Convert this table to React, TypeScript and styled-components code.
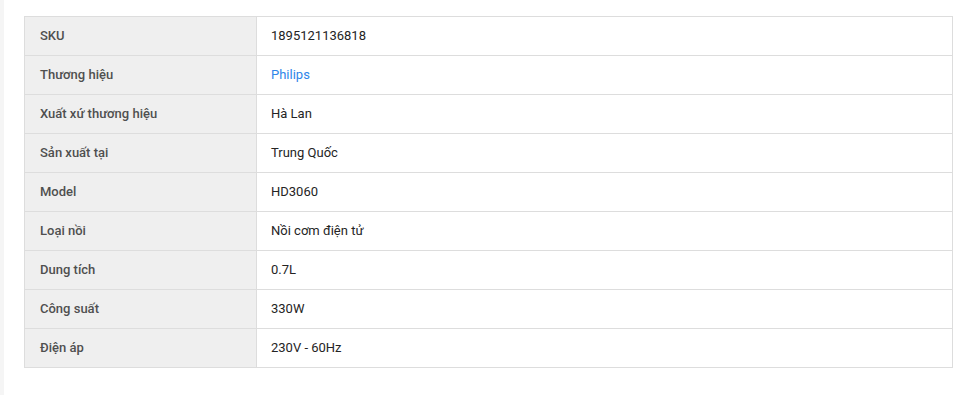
import styled, { createGlobalStyle } from "styled-components";

const GlobalStyle = createGlobalStyle`
    html, body {
        margin: 0;
        padding: 0;
        background: #ffffff;
        font-family: Roboto, "Liberation Sans", Arial, sans-serif;
    }
    * { box-sizing: border-box; }
`

const rows: { label: string; value: string; link?: boolean }[] = [
    { label: "SKU", value: "1895121136818" },
    { label: "Thương hiệu", value: "Philips", link: true },
    { label: "Xuất xứ thương hiệu", value: "Hà Lan" },
    { label: "Sản xuất tại", value: "Trung Quốc" },
    { label: "Model", value: "HD3060" },
    { label: "Loại nồi", value: "Nồi cơm điện tử" },
    { label: "Dung tích", value: "0.7L" },
    { label: "Công suất", value: "330W" },
    { label: "Điện áp", value: "230V - 60Hz" },
];

const App = () => {
    return (
        <Page>
            <GlobalStyle />
            <Strip />
            <Content>
                <Table>
                    <tbody>
                        {rows.map((r) => (
                            <tr key={r.label}>
                                <Label>{r.label}</Label>
                                <Value $link={r.link}>{r.value}</Value>
                            </tr>
                        ))}
                    </tbody>
                </Table>
            </Content>
        </Page>
    )
}

const Page = styled.div`
    display: flex;
    width: 969px;
    height: 395px;
    background: #ffffff;
`
const Strip = styled.div`
    width: 4px;
    flex-shrink: 0;
    background: #f5f5f5;
`
const Content = styled.div`
    flex: 1;
    padding: 16px 12px 0 20px;
`
const Table = styled.table`
    width: 929px;
    border-collapse: collapse;
    table-layout: fixed;
    font-size: 13px;
    line-height: 20px;
    tr {
        height: 39px;
    }
`
const Label = styled.td`
    width: 232px;
    background: #efefef;
    border: 1px solid #dddddd;
    padding: 0 15px;
    color: #4f4f4f;
    font-weight: 500;
    vertical-align: middle;
`
const Value = styled.td<{ $link?: boolean }>`
    border: 1px solid #dddddd;
    padding: 0 14px;
    color: ${(p) => (p.$link ? "#2f86e9" : "#242424")};
    vertical-align: middle;
`

export default App;
